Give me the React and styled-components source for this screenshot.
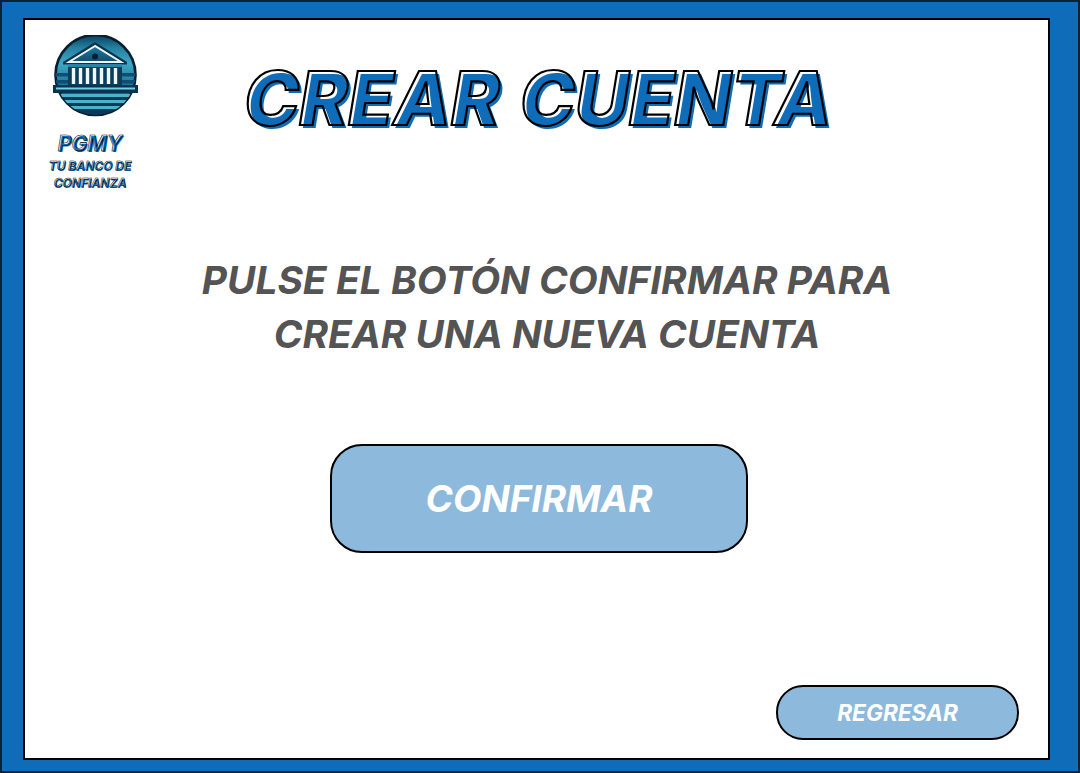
import React from 'react';
import styled, { createGlobalStyle } from 'styled-components';

const GlobalStyle = createGlobalStyle`
  html, body {
    margin: 0;
    padding: 0;
    background: #fff;
  }
  * {
    box-sizing: border-box;
  }
`;

const Frame = styled.div`
  width: 1080px;
  height: 773px;
  padding: 18px 28px 11px 23px;
  background: #0e6cb8;
  border: 2px solid #0b2233;
  display: flex;
`;

const Panel = styled.main`
  flex: 1;
  display: flex;
  flex-direction: column;
  background: #fff;
  border: 2px solid #000;
  margin: -2px 0 0 -2px;
  font-family: Inter, 'Liberation Sans', sans-serif;
`;

const Header = styled.header`
  display: flex;
  height: 172px;
  padding: 15px 0 0 23px;
`;

const Brand = styled.div`
  width: 84px;
  display: flex;
  flex-direction: column;
  align-items: center;
`;

const Outlined = styled.span`
  position: relative;
  display: block;
  color: transparent;
  font-family: Inter, 'Liberation Sans', sans-serif;
  font-style: italic;
  font-weight: 800;
  white-space: nowrap;

  &::before,
  &::after {
    content: attr(data-text);
    position: absolute;
    left: 0;
    top: 0;
  }

  &::before {
    color: #0e6cb8;
    transform: translate(${(p) => p.$shift}px, ${(p) => p.$shift}px);
  }

  &::after {
    color: transparent;
    -webkit-text-stroke: ${(p) => p.$stroke}px #000;
  }
`;

const BrandName = styled(Outlined)`
  margin-top: 13px;
  font-size: 21px;
  line-height: 24px;
  font-weight: 700;
`;

const BrandTag = styled(Outlined)`
  top: 2px;
  font-size: 12px;
  line-height: 16.5px;
  font-weight: 700;
  text-align: center;
`;

const Title = styled(Outlined)`
  margin: 14px 0 0 112px;
  font-size: 74px;
  line-height: 98px;
  word-spacing: 4px;
  height: 98px;
`;

const Message = styled.p`
  margin: 61px 0 0;
  padding-left: 21px;
  color: #545454;
  font-size: 38.9px;
  line-height: 54px;
  font-style: italic;
  font-weight: 700;
  text-align: center;
`;

const Button = styled.button`
  display: block;
  font-family: inherit;
  font-style: italic;
  color: #fff;
  background: #8db9dc;
  border: 2px solid #000;
  cursor: pointer;
`;

const ConfirmButton = styled(Button)`
  align-self: flex-start;
  width: 418px;
  height: 109px;
  margin: 83px 0 0 305px;
  border-radius: 32px;
  font-size: 37px;
  font-weight: 700;
`;

const BackButton = styled(Button)`
  align-self: flex-end;
  width: 243px;
  height: 55px;
  margin: auto 29px 18px 0;
  border-radius: 27px;
  font-size: 22.6px;
  font-weight: 700;
`;

const LogoMark = styled.svg`
  width: 88px;
  height: 84px;
  margin-left: 11px;
  flex: none;
`;

const Logo = () => (
  <LogoMark viewBox="0 0 88 84">
    <defs>
      <linearGradient id="disc" x1="0" y1="0" x2="0" y2="1">
        <stop offset="0" stopColor="#0b3f5e" />
        <stop offset="0.16" stopColor="#25809f" />
        <stop offset="0.36" stopColor="#3fa8c6" />
        <stop offset="0.62" stopColor="#1f7396" />
        <stop offset="1" stopColor="#0a3552" />
      </linearGradient>
      <linearGradient id="pediment" x1="0" y1="0" x2="0" y2="1">
        <stop offset="0" stopColor="#1f7a9f" />
        <stop offset="1" stopColor="#114d70" />
      </linearGradient>
      <clipPath id="discClip">
        <circle cx="43.5" cy="40" r="40" />
      </clipPath>
    </defs>
    <circle cx="43.5" cy="40" r="40" fill="url(#disc)" stroke="#071f30" strokeWidth="2.6" />
    <g clipPath="url(#discClip)">
      <path d="M0 38h88v3.5H0zM0 45h88v3.5H0z" fill="#0f4d72" />
      <path d="M0 62h88v3H0zM0 68h88v3H0zM0 74h88v7H0z" fill="#0a3a58" />
      <path d="M0 59h88v3H0zM0 65h88v3H0zM0 71h88v3H0z" fill="#4cb2cc" />
    </g>
    <path d="M1 50h85v8H1z" fill="#0a3350" />
    <path d="M4 52.5h79v2H4z" fill="#6fd0e2" />
    <path d="M43 7 L11 27 v2.5 H75 v-2.5 Z" fill="#0a3350" />
    <path d="M43 11 L17 27 H69 Z" fill="url(#pediment)" stroke="#eaf6f9" strokeWidth="2" />
    <circle cx="43" cy="21.5" r="3" fill="#071f30" />
    <path d="M16 29h54v21H16z" fill="#0b3d5c" />
    <path d="M16 29h54v3H16z" fill="#2585a8" />
    <path
      d="M21.5 33v16M28.5 33v16M35.5 33v16M42.5 33v16M49.5 33v16M56.5 33v16M63.5 33v16"
      stroke="#eef7f9"
      strokeWidth="3.4"
    />
  </LogoMark>
);

const App = () => (
  <>
    <GlobalStyle />
    <Frame>
      <Panel>
        <Header>
          <Brand>
            <Logo />
            <BrandName data-text="PGMY" $shift={1} $stroke={0.6}>
              PGMY
            </BrandName>
            <BrandTag data-text="TU BANCO DE" $shift={0.5} $stroke={0.5}>
              TU BANCO DE
            </BrandTag>
            <BrandTag data-text="CONFIANZA" $shift={0.5} $stroke={0.5}>
              CONFIANZA
            </BrandTag>
          </Brand>
          <Title data-text="CREAR CUENTA" $shift={3} $stroke={2.2}>
            CREAR CUENTA
          </Title>
        </Header>
        <Message>
          PULSE EL BOTÓN CONFIRMAR PARA
          <br />
          CREAR UNA NUEVA CUENTA
        </Message>
        <ConfirmButton>CONFIRMAR</ConfirmButton>
        <BackButton>REGRESAR</BackButton>
      </Panel>
    </Frame>
  </>
);

export default App;
